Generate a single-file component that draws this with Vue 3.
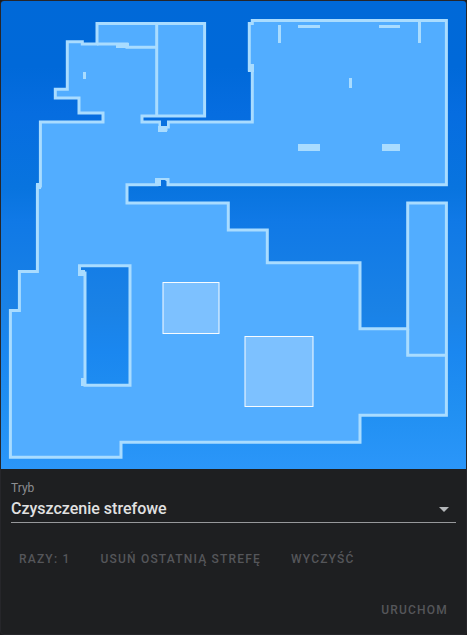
<script setup>
import { ref } from 'vue'

const mode = ref('zone')

const obstacles = [
  { x: 83, y: 72, w: 3, h: 7 },
  { x: 116, y: 43, w: 13, h: 5 },
  { x: 278, y: 25, w: 3, h: 18 },
  { x: 298, y: 25, w: 22, h: 3 },
  { x: 379, y: 25, w: 21, h: 3 },
  { x: 418, y: 22, w: 3, h: 21 },
  { x: 349, y: 78, w: 3, h: 10 },
  { x: 298, y: 144, w: 22, h: 7 },
  { x: 382, y: 144, w: 18, h: 7 },
  { x: 248, y: 64, w: 6, h: 8 },
  { x: 81, y: 378, w: 5, h: 8 },
  { x: 78, y: 270, w: 7, h: 6 },
  { x: 36, y: 183, w: 5, h: 6 },
  { x: 155, y: 178, w: 6, h: 8 },
  { x: 158, y: 126, w: 9, h: 6 },
]

const zones = [
  { x: 163, y: 282.5, w: 56, h: 51 },
  { x: 245, y: 336.5, w: 68, h: 70 },
]
</script>

<template>
  <main class="card">
    <svg class="map" viewBox="1 1 465 468" role="img" aria-label="Mapa">
      <defs>
        <linearGradient id="sea" x1="0" y1="0" x2="0" y2="1">
          <stop offset="0" stop-color="#0069d8" />
          <stop offset="0.14" stop-color="#0069d9" />
          <stop offset="0.24" stop-color="#066de0" />
          <stop offset="0.4" stop-color="#0874df" />
          <stop offset="0.47" stop-color="#1079e6" />
          <stop offset="0.66" stop-color="#1a82e6" />
          <stop offset="0.75" stop-color="#1a87f0" />
          <stop offset="0.88" stop-color="#2190f2" />
          <stop offset="1" stop-color="#2b96f9" />
        </linearGradient>
      </defs>
      <rect x="1" y="1" width="465" height="468" fill="url(#sea)" />
      <path
        class="floor"
        fill-rule="evenodd"
        d="M67.3 41.7H82.3V44H97V23.500H204.600V116H142V122H160V129.500H166V127H168.300V122H252.300V70H249.300V23.500H252.300V20.500H446.400V184.700H168V179.500H157V184.700H127V203H228.300V230H267.300V262.700H360V328.700H407.700V203H446.400V415.300H360V442.200H121V457.200H10.400V310.500H19.400V271.500H37.400V186H40.400V122H103V113H79V98H55.300V89.300H67.300Z M79.500 265.700H130V385.200H85V273H79.500Z"
      />
      <path class="wall" d="M97 44H127V47.200H157 M156.700 23.500V116 M407.700 328.700V355.200H446.400" />
      <rect
        v-for="(o, i) in obstacles"
        :key="i"
        class="obstacle"
        :x="o.x"
        :y="o.y"
        :width="o.w"
        :height="o.h"
      />
      <path fill="#0871df" d="M161 119.500H167V126H161Z M161 180H165.500V187H161Z" />
      <rect
        v-for="(z, i) in zones"
        :key="'z' + i"
        class="zone"
        :x="z.x"
        :y="z.y"
        :width="z.w"
        :height="z.h"
      />
    </svg>

    <section class="controls">
      <div class="field">
        <label for="mode">Tryb</label>
        <select id="mode" v-model="mode">
          <option value="zone">Czyszczenie strefowe</option>
        </select>
        <svg class="arrow" viewBox="0 0 10 5" aria-hidden="true"><path d="M0 0H10L5 5Z" /></svg>
      </div>
      <div class="actions">
        <button type="button" disabled>Razy: 1</button>
        <button type="button" disabled>Usuń ostatnią strefę</button>
        <button type="button" disabled>Wyczyść</button>
      </div>
      <div class="actions end">
        <button type="button" disabled>Uruchom</button>
      </div>
    </section>
  </main>
</template>

<style>
body {
  background: #1c1c1e;
}
</style>

<style scoped>
.card {
  box-sizing: border-box;
  border: 1px solid #26262a;
  border-radius: 4px;
  overflow: hidden;
  background: #1e1f21;
  font-family: Roboto, sans-serif;
}
.map {
  display: block;
  width: 100%;
  height: auto;
}
.floor {
  fill: #52adff;
  stroke: #a9dcff;
  stroke-width: 3;
}
.wall {
  fill: none;
  stroke: #a9dcff;
  stroke-width: 3;
}
.obstacle {
  fill: #a9dcff;
}
.zone {
  fill: rgba(255, 255, 255, 0.25);
  stroke: #f8fcff;
  stroke-width: 1;
}
.controls {
  padding: 10px 10px 6px;
}
.field {
  position: relative;
  display: flex;
  flex-direction: column;
  border-bottom: 1px solid #97989b;
}
label {
  color: #8d8e91;
  font-size: 12px;
  line-height: 18px;
}
select {
  appearance: none;
  width: 100%;
  height: 25px;
  margin: 0;
  padding: 0 24px 2px 0;
  border: 0;
  outline: 0;
  background: transparent;
  color: #e1e1e1;
  font: 500 16px/24px Roboto, sans-serif;
}
.arrow {
  position: absolute;
  right: 7px;
  bottom: 10px;
  width: 10px;
  height: 5px;
  fill: #b4b7ba;
  pointer-events: none;
}
.actions {
  display: flex;
  gap: 14px;
  padding-top: 18px;
}
.end {
  justify-content: flex-end;
  padding-top: 15px;
}
button {
  height: 36px;
  padding: 0 8px;
  border: 0;
  background: transparent;
  color: #55565a;
  font: 500 12px/36px Roboto, sans-serif;
  letter-spacing: 0.1em;
  text-transform: uppercase;
  white-space: nowrap;
}
</style>
